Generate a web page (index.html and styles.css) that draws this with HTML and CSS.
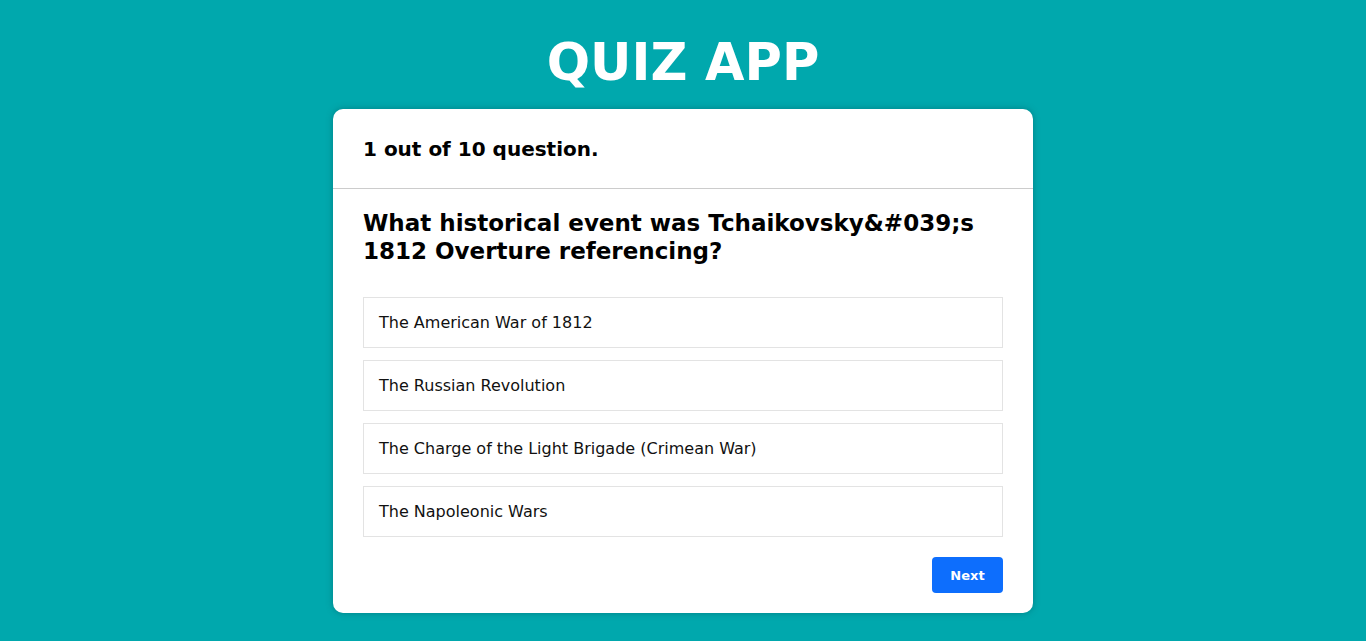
FILE: index.html
```html
<!DOCTYPE html>
<html>
<head>
<meta charset="utf-8">
<link rel="stylesheet" href="styles.css">
</head>
<body>
<h1 class="title">QUIZ APP</h1>
<div class="card">
  <div class="card-header">1 out of 10 question.</div>
  <div class="card-body">
    <h2 class="question">What historical event was Tchaikovsky&amp;#039;s 1812 Overture referencing?</h2>
    <ul class="options">
      <li class="option">The American War of 1812</li>
      <li class="option">The Russian Revolution</li>
      <li class="option">The Charge of the Light Brigade (Crimean War)</li>
      <li class="option">The Napoleonic Wars</li>
    </ul>
    <div class="actions"><button class="next">Next</button></div>
  </div>
</div>
</body>
</html>
```
FILE: styles.css
```css
html, body {
  margin: 0;
  padding: 0;
}
body {
  background: #00a8ad;
  font-family: "DejaVu Sans", Verdana, sans-serif;
  height: 641px;
  overflow: hidden;
}
.title {
  margin: 0;
  padding-top: 28px;
  height: 109px;
  box-sizing: border-box;
  text-align: center;
  color: #fff;
  font-size: 51px;
  font-weight: bold;
  line-height: 70px;
}
.card {
  width: 700px;
  margin: 0 auto;
  background: #fff;
  border-radius: 10px;
  box-shadow: 0 0 6px rgba(0, 90, 95, 0.5);
}
.card-header {
  padding: 0 30px;
  height: 79px;
  display: flex;
  align-items: center;
  font-size: 20px;
  font-weight: bold;
  color: #000;
  border-bottom: 1px solid #cccccc;
}
.card-body {
  padding: 20px 30px 20px;
}
.question {
  margin: 0;
  font-size: 23px;
  line-height: 28px;
  font-weight: bold;
  color: #000;
}
.options {
  list-style: none;
  margin: 32px 0 0;
  padding: 0;
  display: flex;
  flex-direction: column;
  gap: 12px;
}
.option {
  border: 1px solid #e3e3e3;
  height: 51px;
  box-sizing: border-box;
  display: flex;
  align-items: center;
  padding: 0 15px;
  font-size: 16px;
  color: #111;
}
.actions {
  display: flex;
  justify-content: flex-end;
  margin-top: 20px;
}
.next {
  width: 71px;
  height: 36px;
  border: none;
  border-radius: 4px;
  background: #0d6efd;
  color: #fff;
  font-family: "DejaVu Sans", Verdana, sans-serif;
  font-size: 13px;
  font-weight: bold;
}
```
